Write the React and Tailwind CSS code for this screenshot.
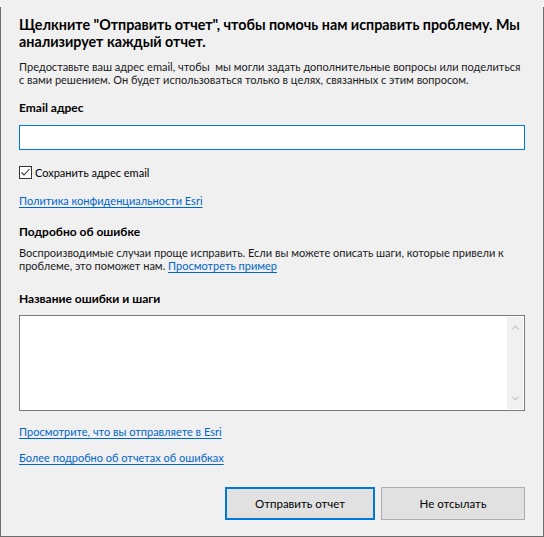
import { ChevronUp, ChevronDown } from "lucide-react";

function Label({ children, className = "" }) {
  return (
    <div className={`text-[12px] leading-[15px] font-bold text-black ${className}`}>
      {children}
    </div>
  );
}

function Link({ children, className = "" }) {
  return (
    <a
      href="#"
      className={`text-[11px] leading-[15px] text-[#0066cc] underline underline-offset-2 ${className}`}
    >
      {children}
    </a>
  );
}

export default function App() {
  return (
    <div className="w-[544px] h-[537px] bg-[#f0f0f0] font-['Lato','Liberation_Sans',sans-serif] text-black flex flex-col">
      <div className="h-[7px] shrink-0" />
      <div className="flex-1 flex flex-col border-l border-r border-b border-[#6d6d6d] px-[18px]">
        {/* Title */}
        <h1 className="mt-[9px] text-[14.3px] leading-[17px] font-bold whitespace-nowrap">
          Щелкните "Отправить отчет", чтобы помочь нам исправить проблему. Мы
          <br />
          анализирует каждый отчет.
        </h1>

        <p className="mt-[10px] text-[11px] leading-[13px] text-[#1a1a1a] whitespace-nowrap">
          Предоставьте ваш адрес email, чтобы&nbsp; мы могли задать дополнительные вопросы или поделиться
          <br />
          с вами решением. Он будет использоваться только в целях, связанных с этим вопросом.
        </p>

        <Label className="mt-[14px]">Email адрес</Label>
        <input
          type="text"
          className="mt-[10px] h-[25px] w-full bg-white border border-[#0078d7] outline-none px-1 text-[11px]"
        />

        <label className="mt-[16px] h-[13px] flex items-center gap-[3px] text-[11px] leading-[15px]">
          <span className="w-[13px] h-[13px] border border-[#333333] bg-white flex items-center justify-center">
            <svg width="11" height="11" viewBox="0 0 11 11" fill="none">
              <path d="M1.5 5.5 L4 8 L9.5 2" stroke="#333333" strokeWidth="1.1" />
            </svg>
          </span>
          Сохранить адрес email
        </label>

        <div className="mt-[14px] flex">
          <Link>Политика конфиденциальности Esri</Link>
        </div>

        <Label className="mt-[16px]">Подробно об ошибке</Label>
        <p className="mt-[7px] text-[11px] leading-[13px] text-[#1a1a1a] whitespace-nowrap">
          Воспроизводимые случаи проще исправить. Если вы можете описать шаги, которые привели к
          <br />
          проблеме, это поможет нам.{" "}
          <a href="#" className="text-[#0066cc] underline underline-offset-2">
            Просмотреть пример
          </a>
        </p>

        <Label className="mt-[19px]">Название ошибки и шаги</Label>
        <div className="mt-[9px] h-[96px] w-full bg-white border border-[#7a7a7a] flex">
          <textarea className="flex-1 resize-none outline-none p-1 text-[11px]" />
          <div className="w-[16px] my-px mr-px bg-[#f0f0f0] flex flex-col items-center justify-between py-[5px] text-[#c2c2c2]">
            <ChevronUp size={11} strokeWidth={2.5} />
            <ChevronDown size={11} strokeWidth={2.5} />
          </div>
        </div>

        <div className="mt-[13px] flex">
          <Link>Просмотрите, что вы отправляете в Esri</Link>
        </div>
        <div className="mt-[11px] flex">
          <Link>Более подробно об отчетах об ошибках</Link>
        </div>

        <div className="mt-[22px] flex justify-end gap-[6px]">
          <button className="w-[150px] h-[33px] bg-[#e1e1e1] border-2 border-[#0078d7] text-[11.5px]">
            Отправить отчет
          </button>
          <button className="w-[144px] h-[33px] bg-[#e1e1e1] border border-[#adadad] text-[11.5px]">
            Не отсылать
          </button>
        </div>
      </div>
    </div>
  );
}
